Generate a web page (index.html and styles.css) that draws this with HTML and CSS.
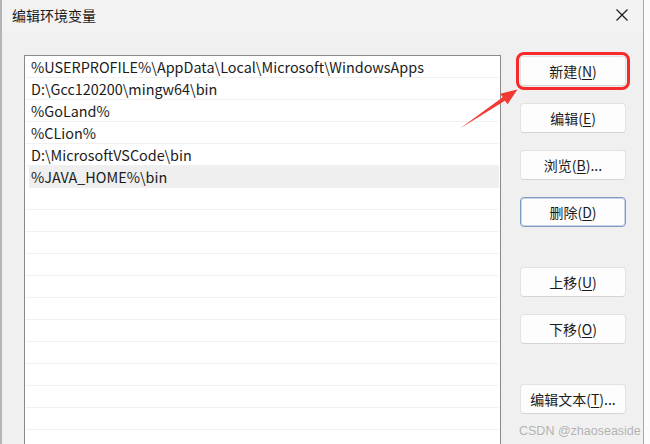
FILE: index.html
```html
<!DOCTYPE html>
<html lang="zh-CN">
<head>
<meta charset="utf-8">
<title>编辑环境变量</title>
<link rel="stylesheet" href="styles.css">
</head>
<body>
<div class="page">
  <div class="edge"></div>
  <div class="dialog">
    <div class="titlebar">
      <span class="title">编辑环境变量</span>
      <svg class="close" width="14" height="14" viewBox="0 0 14 14"><path d="M1.5 1.5L12.5 12.5M12.5 1.5L1.5 12.5" stroke="#1a1a1a" stroke-width="1.2" fill="none"/></svg>
    </div>
    <div class="content">
      <div class="list">
        <div class="row">%USERPROFILE%\AppData\Local\Microsoft\WindowsApps</div>
        <div class="row">D:\Gcc120200\mingw64\bin</div>
        <div class="row">%GoLand%</div>
        <div class="row">%CLion%</div>
        <div class="row">D:\MicrosoftVSCode\bin</div>
        <div class="row selected">%JAVA_HOME%\bin</div>
        <div class="row"></div>
        <div class="row"></div>
        <div class="row"></div>
        <div class="row"></div>
        <div class="row"></div>
        <div class="row"></div>
        <div class="row"></div>
        <div class="row"></div>
        <div class="row"></div>
        <div class="row"></div>
        <div class="row"></div>
        <div class="row"></div>
      </div>
      <div class="buttons">
        <button class="btn highlight">新建(<u>N</u>)</button>
        <button class="btn">编辑(<u>E</u>)</button>
        <button class="btn">浏览(<u>B</u>)...</button>
        <button class="btn focused">删除(<u>D</u>)</button>
        <button class="btn group">上移(<u>U</u>)</button>
        <button class="btn">下移(<u>O</u>)</button>
        <button class="btn group">编辑文本(<u>T</u>)...</button>
      </div>
    </div>
  </div>
  <div class="outside"></div>
</div>
<svg class="arrow" width="650" height="444" viewBox="0 0 650 444"><polygon points="460,128.5 502.7,97.3 500.2,93.8 517.5,89.5 507.6,104.2 504.9,100.7" fill="#f03a32"/></svg>
<div class="watermark">CSDN @zhaoseaside</div>
</body>
</html>
```
FILE: styles.css
```css
html, body {
  margin: 0;
  padding: 0;
}
body {
  width: 650px;
  height: 444px;
  overflow: hidden;
  position: relative;
  background: #fafafa;
  font-family: "Noto Sans CJK SC", "Noto Sans", sans-serif;
  color: #1b1b1b;
}
.page {
  display: flex;
  height: 444px;
}
.edge {
  width: 2px;
  flex-shrink: 0;
  background: #b4b4b4;
}
.dialog {
  width: 641px;
  flex-shrink: 0;
  border-right: 1px solid #a8a8a8;
  background: #f0f0f0;
  display: flex;
  flex-direction: column;
  overflow: hidden;
}
.outside {
  flex: 1;
  background: #fbfbfb;
}
.titlebar {
  height: 32px;
  flex-shrink: 0;
  background: #f3f3f3;
  display: flex;
  align-items: center;
  justify-content: space-between;
  padding: 0 14px 2px 10px;
  box-sizing: border-box;
}
.title {
  font-size: 14px;
  color: #1b1b1b;
}
.close {
  display: block;
}
.content {
  display: flex;
  flex-shrink: 0;
  padding: 23px 0 0 22px;
  gap: 19px;
}
.list {
  width: 477px;
  height: 420px;
  background: #ffffff;
  border: 1px solid #8a8a8a;
  border-bottom: none;
  padding: 0 1px;
  box-sizing: border-box;
}
.row {
  height: 22px;
  border-bottom: 1px solid #f1f1f1;
  box-sizing: border-box;
  font-size: 14.4px;
  line-height: 21px;
  padding-left: 5px;
  white-space: nowrap;
  overflow: hidden;
}
.row.selected {
  background: #efefef;
  margin-left: 3px;
  padding-left: 2px;
}
.buttons {
  display: flex;
  flex-direction: column;
  padding-top: 1px;
}
.btn {
  width: 106px;
  height: 30px;
  flex-shrink: 0;
  margin-bottom: 17px;
  border: 1px solid #e2e2e2;
  border-bottom-color: #d4d4d4;
  border-radius: 4px;
  background: #fdfdfd;
  font-family: "Noto Sans CJK SC", "Noto Sans", sans-serif;
  font-size: 14px;
  color: #1b1b1b;
  padding: 0;
  line-height: 28px;
}
.btn u {
  text-decoration-thickness: 1px;
  text-underline-offset: 2px;
}
.btn.highlight {
  outline: 3px solid #f52a2a;
  outline-offset: 1px;
}
.btn.focused {
  border: 1px solid #7b9ac4;
  box-shadow: inset 0 0 0 1px #c9d6ea;
}
.btn.group {
  margin-top: 23px;
}
.arrow {
  position: absolute;
  left: 0;
  top: 0;
  pointer-events: none;
}
.watermark {
  position: absolute;
  left: 519px;
  top: 424px;
  font-family: "Liberation Sans", Arial, sans-serif;
  font-size: 12.5px;
  color: rgba(150, 150, 150, 0.7);
}
```
